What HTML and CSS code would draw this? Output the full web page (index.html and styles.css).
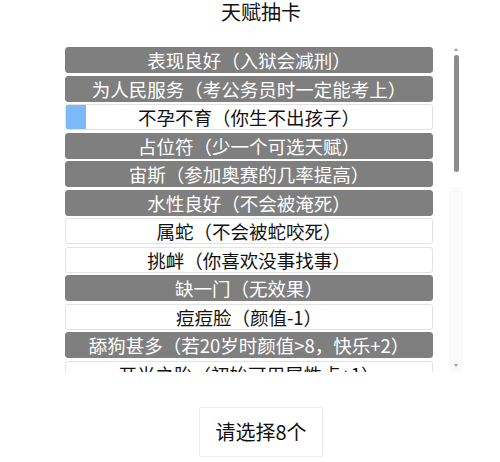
FILE: index.html
```html
<!DOCTYPE html>
<html lang="zh-CN">
<head>
    <meta charset="UTF-8">
    <meta name="viewport" content="width=device-width, initial-scale=1.0">
    <title>天赋抽卡</title>
    <link rel="stylesheet" href="styles.css">
</head>
<body>
    <main class="page">
        <h1 class="title">天赋抽卡</h1>

        <div class="picker">
            <ul class="talent-list">
                <li class="talent picked">表现良好（入狱会减刑）</li>
                <li class="talent picked">为人民服务（考公务员时一定能考上）</li>
                <li class="talent loading">不孕不育（你生不出孩子）</li>
                <li class="talent picked">占位符（少一个可选天赋）</li>
                <li class="talent picked">宙斯（参加奥赛的几率提高）</li>
                <li class="talent picked">水性良好（不会被淹死）</li>
                <li class="talent">属蛇（不会被蛇咬死）</li>
                <li class="talent">挑衅（你喜欢没事找事）</li>
                <li class="talent picked">缺一门（无效果）</li>
                <li class="talent">痘痘脸（颜值-1）</li>
                <li class="talent picked">舔狗甚多（若20岁时颜值&gt;8，快乐+2）</li>
                <li class="talent">开光之胎（初始可用属性点+1）</li>
            </ul>
            <div class="scrollbar">
                <span class="arrow up"></span>
                <span class="thumb"></span>
                <span class="arrow down"></span>
            </div>
        </div>

        <button class="confirm">请选择8个</button>
    </main>
</body>
</html>
```

FILE: styles.css
```css
body {
    margin: 0;
    background: #fff;
    font-family: "Noto Sans CJK SC", "Noto Sans", sans-serif;
    color: #111;
}
.page {
    width: 392px;
    margin-left: 65px;
    display: flex;
    flex-direction: column;
    align-items: center;
}
.title {
    margin: 0;
    font-size: 20px;
    line-height: 24px;
    font-weight: normal;
}

/* talent list + hand drawn scrollbar */
.picker {
    align-self: flex-start;
    width: 398px;
    height: 325px;
    margin-top: 23px;
    display: flex;
}
.talent-list {
    width: 368px;
    margin: 0;
    padding: 0;
    list-style: none;
    overflow: hidden;
}
.talent {
    box-sizing: border-box;
    height: 26px;
    margin-bottom: 2.5px;
    border: 1px solid #e2e2e2;
    border-radius: 3px;
    background: #fff;
    font-size: 18.5px;
    line-height: 24px;
    text-align: center;
    white-space: nowrap;
}
.talent.picked {
    background: #7f7f7f;
    border-color: #7f7f7f;
    color: #fff;
}
.talent.loading {
    background: linear-gradient(to right, #7db9fa 20px, #fff 20px);
}
.scrollbar {
    width: 14px;
    margin-left: auto;
    display: flex;
    flex-direction: column;
    align-items: center;
    background: linear-gradient(to bottom, #fff 140px, #fafafa 140px);
}
.arrow {
    width: 0;
    height: 0;
    border-left: 2.5px solid transparent;
    border-right: 2.5px solid transparent;
}
.arrow.up {
    margin-top: 1px;
    border-bottom: 3px solid #9a9a9a;
}
.arrow.down {
    margin-top: auto;
    margin-bottom: 5px;
    border-top: 3px solid #9a9a9a;
}
.thumb {
    width: 5px;
    height: 117px;
    margin-top: 4px;
    border-radius: 3px;
    background: #8c8c8c;
}

.confirm {
    margin-top: 35px;
    padding: 12px 15px;
    border: 1px solid #ececec;
    border-radius: 2px;
    background: #fff;
    font-family: inherit;
    font-size: 20px;
    line-height: 24px;
    color: #111;
    cursor: pointer;
}
```
